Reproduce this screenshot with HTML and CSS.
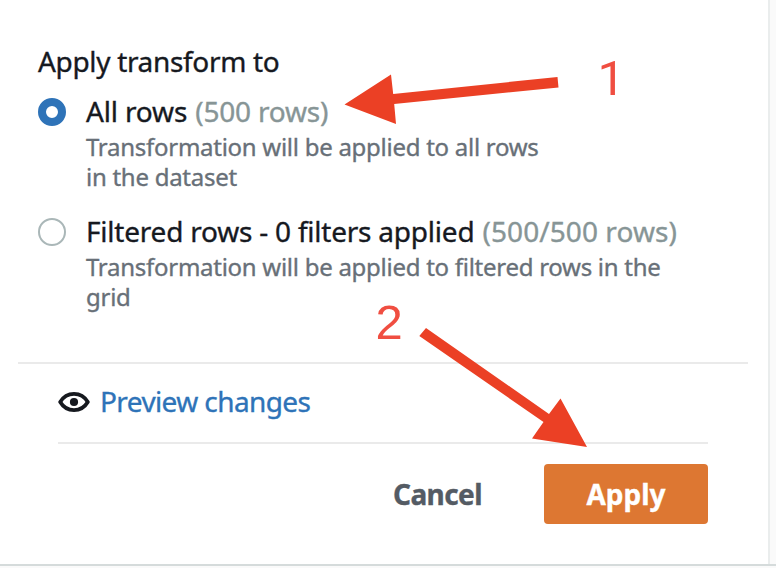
FILE: index.html
```html
<!DOCTYPE html>
<html lang="en">
<head>
<meta charset="utf-8">
<title>Apply transform</title>
<link rel="stylesheet" href="styles.css">
</head>
<body>
<main class="panel">
  <section class="scope">
    <h1 class="heading">Apply transform to</h1>
    <label class="option">
      <span class="radio radio-on"></span>
      <span class="option-text">
        <span class="label"><span class="name-short">All rows</span> <span class="count">(500 rows)</span></span>
        <span class="desc">Transformation will be applied to all rows<br>in the dataset</span>
      </span>
    </label>
    <label class="option">
      <span class="radio"></span>
      <span class="option-text">
        <span class="label"><span class="name-long">Filtered rows - 0 filters applied</span> <span class="count count-long">(500/500 rows)</span></span>
        <span class="desc">Transformation will be applied to filtered rows in the<br>grid</span>
      </span>
    </label>
  </section>
  <footer class="footer">
    <div class="preview">
      <svg class="eye" width="32" height="22" viewBox="0 0 32 22">
        <path d="M2.200 11C5.500 5.500 10.400 2.900 16 2.900S26.500 5.500 29.800 11C26.500 16.500 21.600 19.100 16 19.100S5.500 16.500 2.200 11Z" fill="none" stroke="#16191f" stroke-width="3.800" stroke-linejoin="round"/>
        <circle cx="16" cy="11" r="4.100" fill="#16191f"/>
      </svg>
      <a class="link">Preview changes</a>
    </div>
    <div class="actions">
      <button class="cancel">Cancel</button>
      <button class="apply">Apply</button>
    </div>
  </footer>
</main>
<svg class="marks" width="776" height="568" viewBox="0 0 776 568">
  <g fill="#eb4025">
    <path d="M344.500 104.500L391 74.500L393.200 94L557.500 77L558.500 87.500L394.200 104L396 124Z"/>
    <path d="M426 328L549 414L560.500 398.500L587 447L532 438.500L543.500 422L419.300 336Z"/>
  </g>
  <text class="digit-one" x="597.500" y="95">1</text>
  <text class="digit-two" x="375.500" y="339">2</text>
</svg>
</body>
</html>
```
FILE: styles.css
```css
* { box-sizing: border-box; }
body {
  margin: 0;
  width: 776px;
  height: 568px;
  overflow: hidden;
  background: #fafafa;
  color: #16191f;
  font-family: "Noto Sans", sans-serif;
  font-size: 28px;
  -webkit-text-stroke: 0.35px currentColor;
}
.panel {
  width: 770px;
  height: 566px;
  background: #fff;
  border-right: 2px solid #eaeded;
}
body::after {
  content: "";
  display: block;
  height: 2px;
  margin-top: -2px;
  background: #d5dbdb;
  position: relative;
}
.scope {
  height: 362px;
  padding: 42px 38px 0;
}
.heading {
  margin: 0 0 12px;
  font-size: 28px;
  font-weight: 400;
  line-height: 38px;
  letter-spacing: -0.33px;
  white-space: nowrap;
}
.option {
  display: flex;
  gap: 20px;
  height: 120px;
}
.radio {
  flex: none;
  width: 28px;
  height: 28px;
  margin-top: 6px;
  border: 2px solid #aab7b8;
  border-radius: 50%;
}
.radio-on { border: 8px solid #2e73b8; }
.option-text { white-space: nowrap; }
.label {
  display: flex;
  gap: 8px;
  height: 40px;
  line-height: 38px;
}
.name-short { letter-spacing: -0.15px; }
.name-long { letter-spacing: -0.22px; }
.count { color: #879596; letter-spacing: -0.2px; }
.count-long { letter-spacing: 0.08px; }
.desc {
  display: block;
  color: #687078;
  font-size: 24px;
  line-height: 30px;
  letter-spacing: -0.27px;
}
.footer {
  margin: 0 20px 0 18px;
  padding: 0 40px;
  border-top: 2px solid #eaeaea;
}
.preview {
  display: flex;
  align-items: center;
  gap: 10px;
  height: 80px;
  padding-bottom: 2px;
  border-bottom: 2px solid #eaeaea;
  color: #2e73b8;
  line-height: 38px;
  white-space: nowrap;
}
.link {
  padding-bottom: 2px;
  letter-spacing: -0.6px;
}
.actions {
  display: flex;
  justify-content: flex-end;
  gap: 62px;
  padding-top: 20px;
}
button {
  height: 60px;
  padding: 0;
  border: 0;
  background: none;
  color: #545b64;
  font: 700 28px/60px "Noto Sans", sans-serif;
}
.cancel {
  width: 89px;
  letter-spacing: -0.6px;
  white-space: nowrap;
}
.apply {
  width: 164px;
  border-radius: 4px;
  background: #dd7732;
  color: #fff;
}
.marks {
  position: absolute;
  left: 0;
  top: 0;
  pointer-events: none;
  -webkit-text-stroke: 0;
}
.digit-one, .digit-two {
  fill: #f04e41;
  font-size: 49px;
}
.digit-one { font-family: Roboto, sans-serif; }
.digit-two { font-family: "Liberation Sans", sans-serif; }
```
